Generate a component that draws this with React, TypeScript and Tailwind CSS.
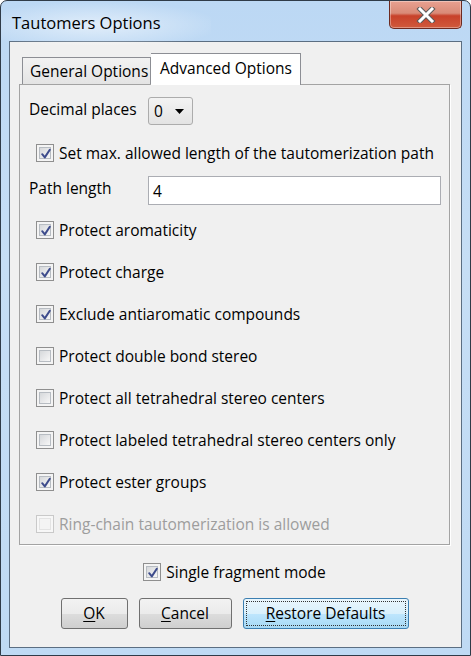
import clsx from "clsx";

const rows: { label: string; checked: boolean; disabled?: boolean }[] = [
  { label: "Protect aromaticity", checked: true },
  { label: "Protect charge", checked: true },
  { label: "Exclude antiaromatic compounds", checked: true },
  { label: "Protect double bond stereo", checked: false },
  { label: "Protect all tetrahedral stereo centers", checked: false },
  { label: "Protect labeled tetrahedral stereo centers only", checked: false },
  { label: "Protect ester groups", checked: true },
  { label: "Ring-chain tautomerization is allowed", checked: false, disabled: true },
];

function CheckBox({ checked, disabled }: { checked: boolean; disabled?: boolean }) {
  return (
    <span
      className={clsx(
        "flex h-[18px] w-[18px] shrink-0 items-center justify-center border p-[2px]",
        disabled ? "border-[#c9c9c9] bg-[#f7f7f7]" : "border-[#8f8f8f] bg-[#f4f4f4]"
      )}
    >
      <span
        className={clsx(
          "relative flex h-full w-full items-center justify-center border",
          disabled
            ? "border-[#e3e3e3] bg-[#f4f4f4]"
            : "border-[#b7bcc2] bg-gradient-to-br from-[#d6d8db] to-[#f7f7f7]"
        )}
      >
        {checked && (
          <svg viewBox="0 0 12 12" className="absolute left-[0px] top-[0px] h-[12px] w-[12px]">
            <path d="M2.2 6.2 L4.8 9.4 L9.8 1.8" fill="none" stroke="#3e4c8c" strokeWidth="2" strokeLinecap="round" strokeLinejoin="round" />
          </svg>
        )}
      </span>
    </span>
  );
}

function Row({ label, checked, disabled }: { label: string; checked: boolean; disabled?: boolean }) {
  return (
    <div className="flex h-[26px] items-center gap-[5px] pl-[16px]">
      <CheckBox checked={checked} disabled={disabled} />
      <span className={clsx("pb-[1px]", disabled ? "text-[#9d9d9d]" : "text-black")}>{label}</span>
    </div>
  );
}

function Button({ children, width, focused }: { children: React.ReactNode; width: string; focused?: boolean }) {
  return (
    <button
      type="button"
      className={clsx(
        "relative flex h-[31px] items-center justify-center rounded-[3px] border",
        width,
        focused
          ? "border-[#3c7fb1] bg-[linear-gradient(#eaf6fd_0%,#d9f0fc_50%,#bee6fd_50%,#a7d9f5_100%)]"
          : "border-[#707070] bg-[linear-gradient(#f2f2f2_0%,#ebebeb_50%,#dddddd_50%,#cfcfcf_100%)]"
      )}
    >
      {focused && <span className="absolute inset-[2px] border border-dotted border-[#333]" />}
      <span className="relative pb-[1px]">{children}</span>
    </button>
  );
}

export default function App() {
  return (
    <div className="flex h-[656px] w-[471px] flex-col rounded-t-[7px] border border-[#2f3b48] bg-[linear-gradient(180deg,#bcd8f4_0%,#c6def5_40%,#bfdaf4_100%)] font-['Open_Sans','Noto_Sans',sans-serif] text-[15.5px] leading-[20px] text-black">
      {/* title bar */}
      <div className="relative flex h-[40px] items-start">
        <div className="pointer-events-none absolute left-0 top-0 h-[44px] w-[210px] bg-[radial-gradient(60%_55%_at_45%_55%,rgba(255,255,255,0.55),transparent)]" />
        <span className="relative pl-[11px] pt-[11px] text-[16.5px] leading-[22px] text-black">Tautomers Options</span>
        <div className="relative ml-auto mr-[8px] flex h-[28px] w-[73px] items-center justify-center rounded-b-[5px] border border-t-0 border-[#6d2a20] bg-[linear-gradient(#e8a191_0%,#d98a77_45%,#c8412a_55%,#d05a3c_100%)] shadow-[inset_0_0_0_1px_rgba(255,255,255,0.35)]">
          <svg viewBox="0 0 20 16" className="h-[16px] w-[20px]">
            <path d="M4 2 L16 14 M16 2 L4 14" stroke="#5a5a5a" strokeWidth="5" strokeLinecap="square" />
            <path d="M4 2 L16 14 M16 2 L4 14" stroke="#ffffff" strokeWidth="3" strokeLinecap="square" />
          </svg>
        </div>
      </div>

      {/* client area */}
      <div className="mx-[8px] mb-[7px] flex flex-1 flex-col border border-[#5b6e82] bg-[#f0f0f0] pb-[17px] pl-[9px] pr-[11px] pt-[11px]">
        {/* tabs */}
        <div className="relative z-10 flex h-[31px] items-end pl-[3px]">
          <div className="flex h-[27px] w-[129px] items-center border border-b-0 border-[#8c8e94] bg-[linear-gradient(#f2f2f2,#e4e4e4)] pl-[7px]">
            General Options
          </div>
          <div className="-mb-px flex h-[32px] w-[150px] items-center border border-b-0 border-l-0 border-[#8c8e94] bg-white pb-[4px] pl-[9px]">
            Advanced Options
          </div>
        </div>

        {/* tab panel */}
        <div className="flex flex-col border border-[#a3a3a3] bg-[#f0f0f0] pb-[7px] pt-[12px] shadow-[1px_1px_0_#ffffff]">
          <div className="flex h-[28px] items-center pl-[9px]">
            <span className="w-[119px] pb-[5px]">Decimal places</span>
            <div className="flex h-[28px] w-[45px] items-center rounded-[3px] border border-[#acacac] bg-[linear-gradient(#f3f3f3,#e3e3e3)] pl-[5px]">
              <span>0</span>
              <svg viewBox="0 0 9 5" className="ml-[12px] h-[5px] w-[9px]">
                <path d="M0 0 L9 0 L4.5 5 Z" fill="#000" />
              </svg>
            </div>
          </div>

          <div className="mt-[15px]">
            <Row label="Set max. allowed length of the tautomerization path" checked />
          </div>

          <div className="mt-[10px] flex h-[29px] items-center pl-[9px] pr-[8px]">
            <span className="w-[119px] pb-[6px]">Path length</span>
            <div className="flex h-[29px] flex-1 items-center border border-[#abadb3] bg-white pl-[4px]">4</div>
          </div>

          <div className="mt-[12px] flex flex-col gap-[16px]">
            {rows.map((r) => (
              <Row key={r.label} label={r.label} checked={r.checked} disabled={r.disabled} />
            ))}
          </div>
        </div>

        {/* single fragment */}
        <div className="mt-[14px] flex h-[26px] items-center justify-center gap-[5px]">
          <CheckBox checked />
          <span className="pb-[1px]">Single fragment mode</span>
        </div>

        {/* buttons */}
        <div className="mt-[13px] flex items-center justify-center gap-[11px]">
          <Button width="w-[67px]">
            <span className="underline underline-offset-2">O</span>K
          </Button>
          <Button width="w-[93px]">
            <span className="underline underline-offset-2">C</span>ancel
          </Button>
          <Button width="w-[166px]" focused>
            <span className="underline underline-offset-2">R</span>estore Defaults
          </Button>
        </div>
      </div>
    </div>
  );
}
